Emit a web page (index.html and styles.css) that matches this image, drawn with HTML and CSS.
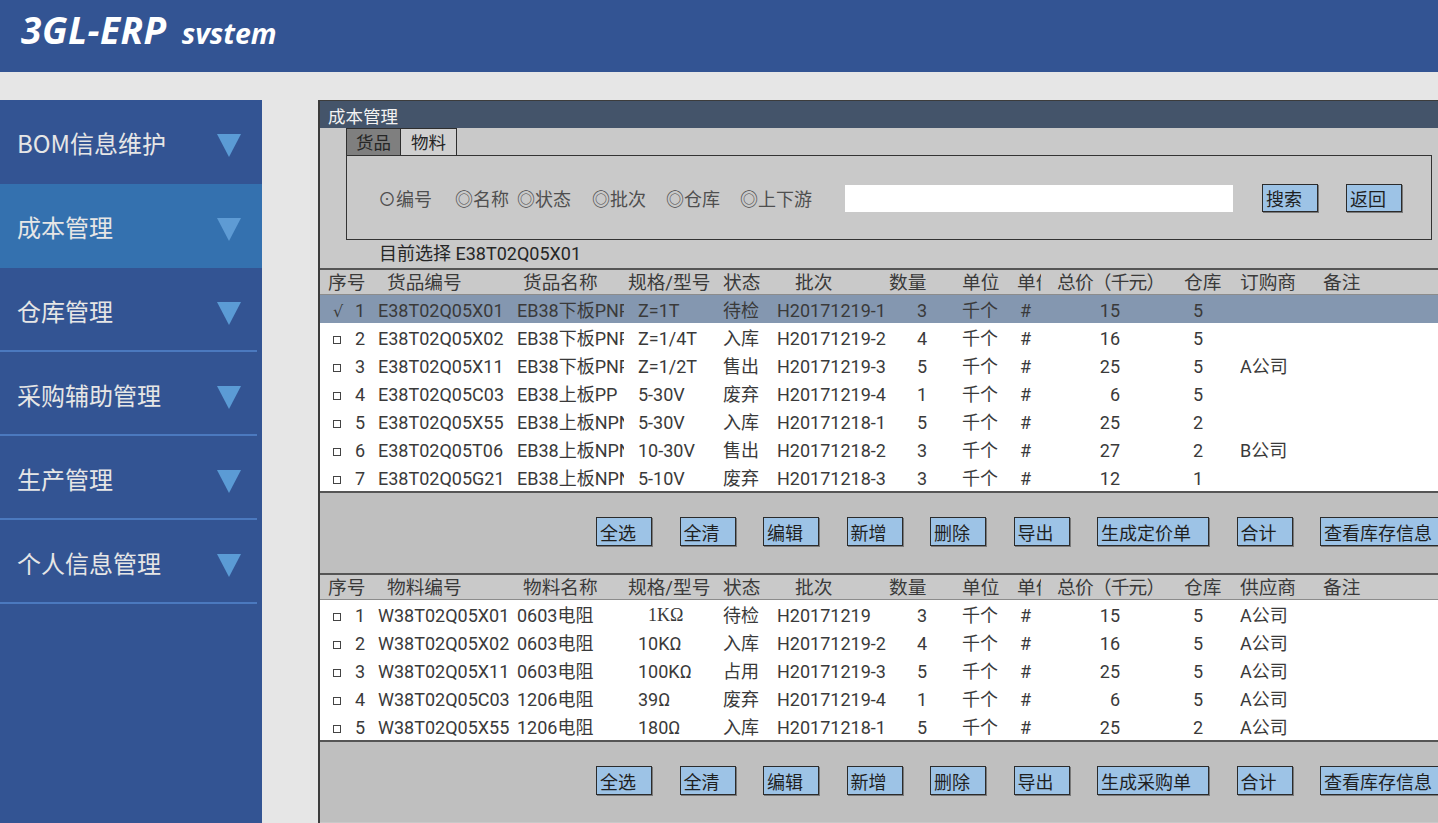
FILE: index.html
```html
<!DOCTYPE html>
<html lang="zh-CN">
<head>
<meta charset="utf-8">
<title>3GL-ERP svstem</title>
<link rel="stylesheet" href="styles.css">
</head>
<body>
<header class="topbar">
  <div class="logo"><span class="logo-main">3GL-ERP</span><span class="logo-sub">svstem</span></div>
</header>
<div class="main">
  <nav class="sidebar">
    <div class="nav-item"><span>BOM信息维护</span><i class="tri"></i></div>
    <div class="nav-item active"><span>成本管理</span><i class="tri"></i></div>
    <div class="nav-item"><span>仓库管理</span><i class="tri"></i></div>
    <div class="nav-item"><span>采购辅助管理</span><i class="tri"></i></div>
    <div class="nav-item"><span>生产管理</span><i class="tri"></i></div>
    <div class="nav-item"><span>个人信息管理</span><i class="tri"></i></div>
  </nav>
  <section class="panel">
    <div class="panel-title">成本管理</div>
    <div class="search-area">
      <div class="tabs"><span class="tab on">货品</span><span class="tab">物料</span></div>
      <div class="search-box">
        <div class="radios">
          <span>⊙编号</span><span>◎名称</span><span>◎状态</span><span>◎批次</span><span>◎仓库</span><span>◎上下游</span>
        </div>
        <div class="search-input"></div>
        <button class="btn sbtn">搜索</button>
        <button class="btn sbtn">返回</button>
      </div>
      <div class="current">目前选择 E38T02Q05X01</div>
    </div>

    <div class="table">
      <div class="row head">
        <span class="c1">序号</span><span class="c2">货品编号</span><span class="c3">货品名称</span><span class="c4">规格/型号</span><span class="c5">状态</span><span class="c6">批次</span><span class="c7">数量</span><span class="c8">单位</span><span class="c9">单价</span><span class="c10">总价（千元）</span><span class="c11">仓库</span><span class="c12">订购商</span><span class="c13">备注</span>
      </div>
      <div class="row sel">
        <span class="c1"><i class="ck">√</i>1</span><span class="c2">E38T02Q05X01</span><span class="c3">EB38下板PNP</span><span class="c4">Z=1T</span><span class="c5">待检</span><span class="c6">H20171219-1</span><span class="c7">3</span><span class="c8">千个</span><span class="c9">#</span><span class="c10">15</span><span class="c11">5</span><span class="c12"></span><span class="c13"></span>
      </div>
      <div class="row">
        <span class="c1"><i class="cb"></i>2</span><span class="c2">E38T02Q05X02</span><span class="c3">EB38下板PNP</span><span class="c4">Z=1/4T</span><span class="c5">入库</span><span class="c6">H20171219-2</span><span class="c7">4</span><span class="c8">千个</span><span class="c9">#</span><span class="c10">16</span><span class="c11">5</span><span class="c12"></span><span class="c13"></span>
      </div>
      <div class="row">
        <span class="c1"><i class="cb"></i>3</span><span class="c2">E38T02Q05X11</span><span class="c3">EB38下板PNP</span><span class="c4">Z=1/2T</span><span class="c5">售出</span><span class="c6">H20171219-3</span><span class="c7">5</span><span class="c8">千个</span><span class="c9">#</span><span class="c10">25</span><span class="c11">5</span><span class="c12">A公司</span><span class="c13"></span>
      </div>
      <div class="row">
        <span class="c1"><i class="cb"></i>4</span><span class="c2">E38T02Q05C03</span><span class="c3">EB38上板PP</span><span class="c4">5-30V</span><span class="c5">废弃</span><span class="c6">H20171219-4</span><span class="c7">1</span><span class="c8">千个</span><span class="c9">#</span><span class="c10">6</span><span class="c11">5</span><span class="c12"></span><span class="c13"></span>
      </div>
      <div class="row">
        <span class="c1"><i class="cb"></i>5</span><span class="c2">E38T02Q05X55</span><span class="c3">EB38上板NPN</span><span class="c4">5-30V</span><span class="c5">入库</span><span class="c6">H20171218-1</span><span class="c7">5</span><span class="c8">千个</span><span class="c9">#</span><span class="c10">25</span><span class="c11">2</span><span class="c12"></span><span class="c13"></span>
      </div>
      <div class="row">
        <span class="c1"><i class="cb"></i>6</span><span class="c2">E38T02Q05T06</span><span class="c3">EB38上板NPN</span><span class="c4">10-30V</span><span class="c5">售出</span><span class="c6">H20171218-2</span><span class="c7">3</span><span class="c8">千个</span><span class="c9">#</span><span class="c10">27</span><span class="c11">2</span><span class="c12">B公司</span><span class="c13"></span>
      </div>
      <div class="row">
        <span class="c1"><i class="cb"></i>7</span><span class="c2">E38T02Q05G21</span><span class="c3">EB38上板NPN</span><span class="c4">5-10V</span><span class="c5">废弃</span><span class="c6">H20171218-3</span><span class="c7">3</span><span class="c8">千个</span><span class="c9">#</span><span class="c10">12</span><span class="c11">1</span><span class="c12"></span><span class="c13"></span>
      </div>
    </div>
    <div class="btnbar">
      <button class="btn">全选</button><button class="btn">全清</button><button class="btn">编辑</button><button class="btn">新增</button><button class="btn">删除</button><button class="btn">导出</button><button class="btn wide">生成定价单</button><button class="btn">合计</button><button class="btn last">查看库存信息</button>
    </div>

    <div class="table">
      <div class="row head">
        <span class="c1">序号</span><span class="c2">物料编号</span><span class="c3">物料名称</span><span class="c4">规格/型号</span><span class="c5">状态</span><span class="c6">批次</span><span class="c7">数量</span><span class="c8">单位</span><span class="c9">单价</span><span class="c10">总价（千元）</span><span class="c11">仓库</span><span class="c12">供应商</span><span class="c13">备注</span>
      </div>
      <div class="row">
        <span class="c1"><i class="cb"></i>1</span><span class="c2">W38T02Q05X01</span><span class="c3">0603电阻</span><span class="c4 serif">1KΩ</span><span class="c5">待检</span><span class="c6">H20171219</span><span class="c7">3</span><span class="c8">千个</span><span class="c9">#</span><span class="c10">15</span><span class="c11">5</span><span class="c12">A公司</span><span class="c13"></span>
      </div>
      <div class="row">
        <span class="c1"><i class="cb"></i>2</span><span class="c2">W38T02Q05X02</span><span class="c3">0603电阻</span><span class="c4">10KΩ</span><span class="c5">入库</span><span class="c6">H20171219-2</span><span class="c7">4</span><span class="c8">千个</span><span class="c9">#</span><span class="c10">16</span><span class="c11">5</span><span class="c12">A公司</span><span class="c13"></span>
      </div>
      <div class="row">
        <span class="c1"><i class="cb"></i>3</span><span class="c2">W38T02Q05X11</span><span class="c3">0603电阻</span><span class="c4">100KΩ</span><span class="c5">占用</span><span class="c6">H20171219-3</span><span class="c7">5</span><span class="c8">千个</span><span class="c9">#</span><span class="c10">25</span><span class="c11">5</span><span class="c12">A公司</span><span class="c13"></span>
      </div>
      <div class="row">
        <span class="c1"><i class="cb"></i>4</span><span class="c2">W38T02Q05C03</span><span class="c3">1206电阻</span><span class="c4">39Ω</span><span class="c5">废弃</span><span class="c6">H20171219-4</span><span class="c7">1</span><span class="c8">千个</span><span class="c9">#</span><span class="c10">6</span><span class="c11">5</span><span class="c12">A公司</span><span class="c13"></span>
      </div>
      <div class="row">
        <span class="c1"><i class="cb"></i>5</span><span class="c2">W38T02Q05X55</span><span class="c3">1206电阻</span><span class="c4">180Ω</span><span class="c5">入库</span><span class="c6">H20171218-1</span><span class="c7">5</span><span class="c8">千个</span><span class="c9">#</span><span class="c10">25</span><span class="c11">2</span><span class="c12">A公司</span><span class="c13"></span>
      </div>
    </div>
    <div class="btnbar">
      <button class="btn">全选</button><button class="btn">全清</button><button class="btn">编辑</button><button class="btn">新增</button><button class="btn">删除</button><button class="btn">导出</button><button class="btn wide">生成采购单</button><button class="btn">合计</button><button class="btn last">查看库存信息</button>
    </div>
  </section>
</div>
</body>
</html>
```

FILE: styles.css
```css
* { box-sizing: border-box; margin: 0; padding: 0; }
html, body { width: 1438px; height: 823px; overflow: hidden; }
body {
  background: #e6e6e6;
  font-family: "Roboto", "Noto Sans CJK SC", sans-serif;
  color: #3a3a3a;
}

/* header */
.topbar {
  height: 72px;
  background: #335493;
  display: flex;
  align-items: center;
  padding: 0 0 14px 21px;
}
.logo {
  color: #fff;
  font-family: "Open Sans", "DejaVu Sans", sans-serif;
  font-weight: 700;
  font-style: italic;
  display: flex;
  align-items: baseline;
  gap: 15px;
}
.logo-main { font-size: 37px; letter-spacing: 0.5px; }
.logo-sub { font-size: 28.5px; }

/* layout */
.main { display: flex; padding-top: 28px; gap: 56px; }

/* sidebar */
.sidebar { width: 262px; flex: none; height: 723px; background: #335493; }
.nav-item {
  height: 84px;
  display: flex;
  align-items: center;
  justify-content: space-between;
  padding: 0 21px 0 17px;
  color: #e6e6e6;
  font-size: 24px;
  font-family: "Noto Sans CJK SC", sans-serif;
}
.nav-item.active { background: #3471af; }
.nav-item:nth-child(n+3) {
  background: linear-gradient(#4b79bf, #4b79bf) 0 100% / 257px 2px no-repeat;
}
.tri {
  width: 0; height: 0;
  border-left: 12px solid transparent;
  border-right: 12px solid transparent;
  border-top: 23px solid #5b9bd5;
  margin-top: 6px;
}
.nav-item.active .tri { border-top-color: #5e9bd4; }

/* panel */
.panel {
  width: 1130px;
  flex: none;
  height: 723px;
  background: #c9c9c9;
  border-left: 2px solid #3c3c3c;
  border-top: 1px solid #3c3c3c;
}
.panel-title {
  height: 27px;
  background: #44546a;
  color: #f2f2f2;
  font-family: "Noto Sans CJK SC", sans-serif;
  font-size: 17.5px;
  line-height: 29px;
  padding-left: 8px;
}
.search-area { padding-left: 26px; }
.tabs { display: flex; height: 27px; }
.tab {
  width: 55px;
  border: 1.5px solid #2e2e2e;
  border-bottom: none;
  text-align: center;
  font-family: "Noto Sans CJK SC", sans-serif;
  font-size: 17.5px;
  line-height: 25px;
  color: #262626;
  background: #d0d0d0;
}
.tab + .tab { border-left: none; width: 56px; }
.tab.on { background: #7f7f7f; }
.search-box {
  width: 1086px;
  height: 85px;
  border: 1.5px solid #333;
  display: flex;
  align-items: center;
  padding-left: 31px;
  padding-top: 1px;
}
.radios {
  display: grid;
  grid-template-columns: 77px 62px 75px 74px 74px 105px;
  font-family: "Liberation Serif", "Noto Sans CJK SC", serif;
  font-size: 18px;
  color: #4f4f4f;
  white-space: nowrap;
}
.search-input { width: 388px; height: 27px; background: #fff; margin-right: 29px; }
.btn {
  height: 29px;
  width: 56px;
  flex: none;
  background: #9dc3e6;
  border: 1px solid #2b2b2b;
  box-shadow: 1px 1px 0 #7a7a7a;
  font-family: "Noto Sans CJK SC", sans-serif;
  font-size: 18px;
  color: #1f1f1f;
  text-align: left;
  padding-left: 3px;
  line-height: 26px;
  white-space: nowrap;
  overflow: hidden;
}
.sbtn { height: 28px; margin-right: 28px; }
.btn.wide { width: 112px; }
.btn.last { width: 124px; }
.current {
  height: 28px;
  line-height: 28px;
  padding-left: 33px;
  font-size: 18px;
  color: #262626;
}

/* tables */
.table { background: #fff; border-top: 2px solid #555; }
.row {
  display: grid;
  grid-template-columns: 58px 139px 107px 93px 60px 112px 73px 55px 24px 143px 56px 83px 1fr;
  grid-template-rows: 28px;
  height: 28px;
  font-size: 18px;
  white-space: nowrap;
}
.row > span { overflow: hidden; padding-top: 3px; line-height: 25px; }
.row.sel { background: #8497b0; }
.row.head {
  background: #c9c9c9;
  grid-template-rows: 25px;
  height: 25px;
  font-size: 18.7px;
  border-bottom: 1px solid #8c8c8c;
}
.row.head > span { padding-top: 0; line-height: 27px; }
.cb {
  display: inline-block;
  width: 8px; height: 8px;
  border: 1px solid #444;
  margin-right: 14px;
  vertical-align: 1px;
}
.ck { display: inline-block; width: 22px; font-style: normal; font-family: "DejaVu Sans", sans-serif; font-size: 16px; }
.row > .c1 { padding-left: 13px; }
.row > .c4 { padding-left: 14px; }
.row > .c4.serif { padding-left: 24px; font-family: "Liberation Serif", serif; }
.row > .c5 { padding-left: 6px; }
.row > .c7 { padding-left: 28px; }
.row > .c9 { padding-left: 3px; }
.row > .c10 { text-align: right; padding-right: 64px; }
.row > .c11 { padding-left: 9px; }

.head > .c1 { padding-left: 8px; }
.head > .c2 { padding-left: 9px; }
.head > .c3 { padding-left: 6px; }
.head > .c4 { padding-left: 4px; }
.head > .c5 { padding-left: 6px; }
.head > .c6 { padding-left: 18px; }
.head > .c7 { padding-left: 0; }
.head > .c9 { padding-left: 0; }
.head > .c10 { text-align: left; padding: 0 0 0 16px; letter-spacing: -0.8px; }
.head > .c11 { padding-left: 0; }

/* button bars */
.btnbar {
  background: #bfbfbf;
  height: 82px;
  border-top: 2px solid #555;
  display: flex;
  gap: 27.5px;
  padding: 24px 0 0 276px;
  align-items: flex-start;
}
```
